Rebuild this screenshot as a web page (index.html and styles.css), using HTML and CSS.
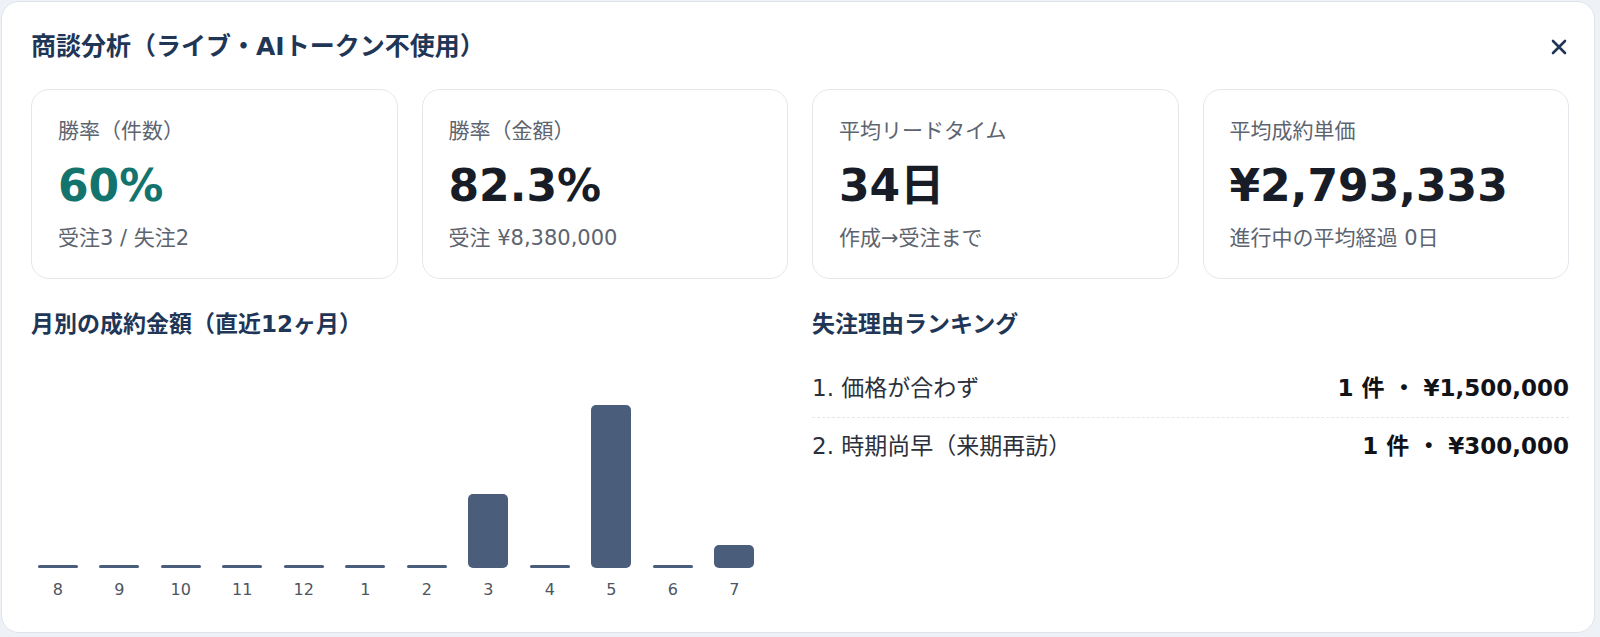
FILE: index.html
```html
<!DOCTYPE html>
<html lang="ja">
<head>
    <meta charset="UTF-8">
    <meta name="viewport" content="width=device-width, initial-scale=1.0">
    <title>商談分析</title>
    <link rel="stylesheet" href="styles.css">
</head>
<body>
    <div class="modal">
        <div class="modal-header">
            <h2 class="modal-title">商談分析（ライブ・AIトークン不使用）</h2>
            <button class="close-btn" aria-label="閉じる">
                <svg width="24" height="24" viewBox="0 0 24 24">
                    <path d="M6 6 L18 18 M18 6 L6 18" stroke="currentColor" stroke-width="2.6" stroke-linecap="round" fill="none"/>
                </svg>
            </button>
        </div>

        <div class="kpi-grid">
            <div class="kpi-card">
                <div class="kpi-label">勝率（件数）</div>
                <div class="kpi-value accent">60%</div>
                <div class="kpi-sub">受注3 / 失注2</div>
            </div>
            <div class="kpi-card">
                <div class="kpi-label">勝率（金額）</div>
                <div class="kpi-value">82.3%</div>
                <div class="kpi-sub">受注 ¥8,380,000</div>
            </div>
            <div class="kpi-card">
                <div class="kpi-label">平均リードタイム</div>
                <div class="kpi-value">34日</div>
                <div class="kpi-sub">作成→受注まで</div>
            </div>
            <div class="kpi-card">
                <div class="kpi-label">平均成約単価</div>
                <div class="kpi-value">¥2,793,333</div>
                <div class="kpi-sub">進行中の平均経過 0日</div>
            </div>
        </div>

        <div class="lower">
            <section>
                <h3 class="section-title">月別の成約金額（直近12ヶ月）</h3>
                <div class="chart">
                    <div class="bar-col"><div class="bar-area"><div class="bar empty"></div></div><span class="bar-label">8</span></div>
                    <div class="bar-col"><div class="bar-area"><div class="bar empty"></div></div><span class="bar-label">9</span></div>
                    <div class="bar-col"><div class="bar-area"><div class="bar empty"></div></div><span class="bar-label">10</span></div>
                    <div class="bar-col"><div class="bar-area"><div class="bar empty"></div></div><span class="bar-label">11</span></div>
                    <div class="bar-col"><div class="bar-area"><div class="bar empty"></div></div><span class="bar-label">12</span></div>
                    <div class="bar-col"><div class="bar-area"><div class="bar empty"></div></div><span class="bar-label">1</span></div>
                    <div class="bar-col"><div class="bar-area"><div class="bar empty"></div></div><span class="bar-label">2</span></div>
                    <div class="bar-col"><div class="bar-area"><div class="bar" style="height: 32.5%"></div></div><span class="bar-label">3</span></div>
                    <div class="bar-col"><div class="bar-area"><div class="bar empty"></div></div><span class="bar-label">4</span></div>
                    <div class="bar-col"><div class="bar-area"><div class="bar" style="height: 71.5%"></div></div><span class="bar-label">5</span></div>
                    <div class="bar-col"><div class="bar-area"><div class="bar empty"></div></div><span class="bar-label">6</span></div>
                    <div class="bar-col"><div class="bar-area"><div class="bar" style="height: 10.2%"></div></div><span class="bar-label">7</span></div>
                </div>
            </section>

            <section>
                <h3 class="section-title">失注理由ランキング</h3>
                <ol class="rank-list">
                    <li class="rank-item">
                        <span class="rank-name">1. 価格が合わず</span>
                        <span class="rank-value">1 件 ・ ¥1,500,000</span>
                    </li>
                    <li class="rank-item">
                        <span class="rank-name">2. 時期尚早（来期再訪）</span>
                        <span class="rank-value">1 件 ・ ¥300,000</span>
                    </li>
                </ol>
            </section>
        </div>
    </div>
</body>
</html>
```

FILE: styles.css
```css
body {
    margin: 0;
    padding: 1px 5px 0 1px;
    background-color: #eef1f5;
    font-family: 'DejaVu Sans', 'Noto Sans CJK JP', sans-serif;
    color: #1a1f2b;
}

.modal {
    height: 632px;
    box-sizing: border-box;
    background-color: #ffffff;
    border: 1px solid #dfe4ea;
    border-radius: 18px;
    padding: 27px 25px 0 29px;
}

.modal-header {
    display: flex;
    justify-content: space-between;
    align-items: center;
}

.modal-title {
    margin: 0;
    font-size: 25px;
    line-height: 36px;
    font-weight: bold;
    color: #1f3656;
}

.close-btn {
    border: none;
    background: none;
    padding: 0;
    width: 24px;
    height: 24px;
    color: #1f3656;
    cursor: pointer;
    margin-right: -2px;
}

.kpi-grid {
    display: grid;
    grid-template-columns: repeat(4, 1fr);
    gap: 24px;
    margin-top: 24px;
}

.kpi-card {
    height: 190px;
    box-sizing: border-box;
    border: 1px solid #e3e7ec;
    border-radius: 18px;
    padding: 25px 26px 0;
}

.kpi-label {
    font-size: 21px;
    line-height: 32px;
    color: #5d6470;
}

.kpi-value {
    font-size: 44px;
    line-height: 54px;
    font-weight: bold;
    color: #171c26;
    margin-top: 12px;
}

.kpi-value.accent {
    color: #13736d;
}

.kpi-sub {
    font-size: 21px;
    line-height: 32px;
    color: #5d6470;
    margin-top: 9px;
}

.lower {
    display: grid;
    grid-template-columns: 1fr 1fr;
    gap: 24px;
    margin-top: 30px;
}

.section-title {
    margin: 0;
    font-size: 23px;
    line-height: 31px;
    font-weight: bold;
    color: #1f3656;
}

.chart {
    display: flex;
    gap: 8px;
    padding-right: 27px;
}

.bar-col {
    flex: 1;
    display: flex;
    flex-direction: column;
    align-items: center;
}

.bar-area {
    height: 228px;
    width: 100%;
    display: flex;
    justify-content: center;
    align-items: flex-end;
}

.bar {
    width: 40px;
    background-color: #4a5d7b;
    border-radius: 5px;
}

.bar.empty {
    height: 3px;
    border-radius: 2px;
}

.bar-label {
    margin-top: 11px;
    font-size: 16px;
    line-height: 22px;
    color: #4d5562;
}

.rank-list {
    list-style: none;
    margin: 20px 0 0;
    padding: 0;
}

.rank-item {
    display: flex;
    justify-content: space-between;
    align-items: center;
    padding: 13px 0;
    font-size: 23px;
    line-height: 31px;
}

.rank-item + .rank-item {
    border-top: 1px dashed #e3e7ec;
}

.rank-name {
    color: #2b303a;
}

.rank-value {
    font-weight: bold;
    color: #111318;
}
```
